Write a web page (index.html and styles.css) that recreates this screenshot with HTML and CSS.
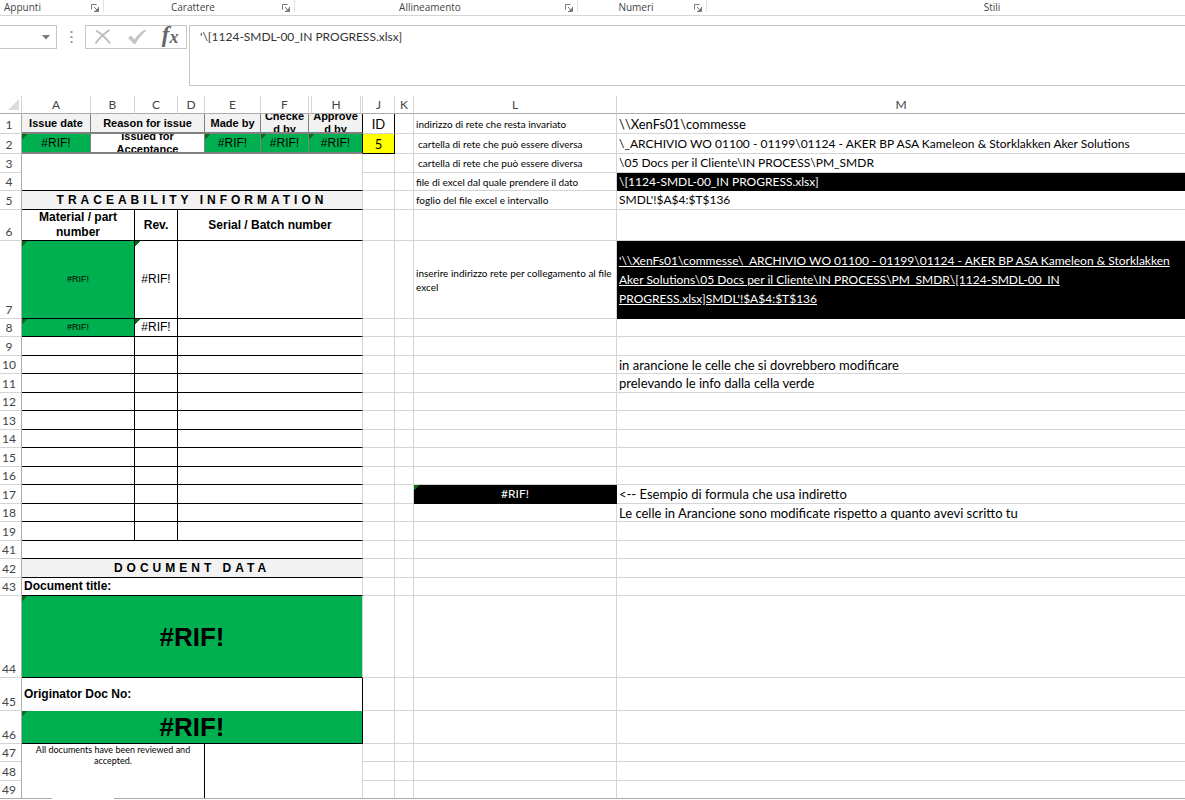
FILE: index.html
```html
<!DOCTYPE html>
<html lang="it">
<head>
  <meta charset="UTF-8" />
  <meta name="viewport" content="width=device-width, initial-scale=1.0"/>
  <title>1124-SMDL-00_IN PROGRESS.xlsx</title>
  <link rel="stylesheet" href="styles.css">
</head>
<body>

  <svg class="defs" aria-hidden="true">
    <symbol id="launcher" viewBox="0 0 8 8">
      <path d="M0.5 5.5V0.5H5.5M3 3L6 6M7.5 3V7.5H3" fill="none" stroke="#777" stroke-width="1"/>
      <path d="M7 4V7H4Z" fill="#777"/>
    </symbol>
  </svg>

  <div class="ribbon">
    <div class="group clipboard">
      <span>Appunti</span>
      <button aria-label="Opzioni Appunti"><svg><use href="#launcher"/></svg></button>
    </div>
    <div class="group font">
      <span>Carattere</span>
      <button aria-label="Opzioni Carattere"><svg><use href="#launcher"/></svg></button>
    </div>
    <div class="group alignment">
      <span>Allineamento</span>
      <button aria-label="Opzioni Allineamento"><svg><use href="#launcher"/></svg></button>
    </div>
    <div class="group numbers">
      <span>Numeri</span>
      <button aria-label="Opzioni Numeri"><svg><use href="#launcher"/></svg></button>
    </div>
    <div class="group styles"><span>Stili</span></div>
  </div>

  <div class="formula-bar">
    <div class="name-box">
      <input type="text" aria-label="Casella nome">
      <button aria-label="Elenco nomi"><svg width="8" height="5" viewBox="0 0 8 5"><path d="M0 0H8L4 4.500Z" fill="#777"/></svg></button>
    </div>
    <svg class="grip" width="3" height="12" viewBox="0 0 3 12"><path d="M1.500 0V12" stroke="#999" stroke-width="2" stroke-dasharray="2 3"/></svg>
    <div class="entry-buttons">
      <button aria-label="Annulla"><svg width="18" height="16" viewBox="0 0 18 16"><path d="M2 1.500C6 4 12 9 16 14.500M15.500 1C10 4.500 5 9.500 1.500 14.500" fill="none" stroke="#bdbdbd" stroke-width="2"/></svg></button>
      <button aria-label="Invio"><svg width="20" height="16" viewBox="0 0 20 16"><path d="M1 9L4 6.500L7.500 10.500C10 6.500 13.500 3 18 0.500L19 2C14 6 11 10 8.500 15H7Z" fill="#c4c4c4"/></svg></button>
      <button class="fx" aria-label="Inserisci funzione"><i>f</i><i class="x">x</i></button>
    </div>
    <textarea class="formula" aria-label="Barra della formula" spellcheck="false">'\[1124-SMDL-00_IN PROGRESS.xlsx]</textarea>
  </div>

  <table class="sheet">
    <colgroup>
      <col class="w-head"><col class="w-a"><col class="w-b"><col class="w-c"><col class="w-d"><col class="w-e"><col class="w-f"><col class="w-g"><col class="w-h"><col class="w-i"><col class="w-j"><col class="w-k"><col class="w-l"><col>
    </colgroup>
    <thead>
      <tr>
        <th class="corner"><svg width="11" height="11" viewBox="0 0 11 11"><path d="M11 0V11H0Z" fill="#dcdcdc"/></svg></th>
        <th>A</th><th>B</th><th>C</th><th>D</th><th>E</th><th>F</th><th></th><th>H</th><th></th><th>J</th><th>K</th><th>L</th><th>M</th>
      </tr>
    </thead>
    <tbody>
      <tr class="h20">
        <th>1</th>
        <td class="title">Issue date</td>
        <td class="title" colspan="3">Reason for issue</td>
        <td class="title">Made by</td>
        <td class="title"><div class="clip">Checke<br>d by</div></td>
        <td class="title edge" colspan="3"><div class="clip">Approve<br>d by</div></td>
        <td class="id">ID</td><td></td>
        <td class="note">indirizzo di rete che resta invariato</td>
        <td>\\XenFs01\commesse</td>
      </tr>
      <tr class="h20">
        <th>2</th>
        <td class="issue green err">#RIF!</td>
        <td class="issue reason" colspan="3"><div class="clip">Issued for<br>Acceptance</div></td>
        <td class="issue green err">#RIF!</td>
        <td class="issue green err">#RIF!</td>
        <td class="issue green err edge" colspan="3">#RIF!</td>
        <td class="id yellow">5</td><td></td>
        <td class="note indent">cartella di rete che può essere diversa</td>
        <td class="path">\_ARCHIVIO WO 01100 - 01199\01124 - AKER BP ASA Kameleon &amp; Storklakken Aker Solutions</td>
      </tr>
      <tr class="h19">
        <th>3</th>
        <td class="line" colspan="9" rowspan="2"></td><td></td><td></td>
        <td class="note indent">cartella di rete che può essere diversa</td>
        <td class="path">\05 Docs per il Cliente\IN PROCESS\PM_SMDR</td>
      </tr>
      <tr>
        <th>4</th>
        <td></td><td></td>
        <td class="note">file di excel dal quale prendere il dato</td>
        <td class="black path">\[1124-SMDL-00_IN PROGRESS.xlsx]</td>
      </tr>
      <tr class="h19">
        <th>5</th>
        <td class="section" colspan="9">TRACEABILITY INFORMATION</td><td></td><td></td>
        <td class="note">foglio del file excel e intervallo</td>
        <td class="path">SMDL'!$A$4:$T$136</td>
      </tr>
      <tr class="h31">
        <th>6</th>
        <td class="box bold" colspan="2">Material / part<br>number</td><td class="box bold">Rev.</td><td class="line bold" colspan="6">Serial / Batch number</td>
        <td></td><td></td><td></td><td></td>
      </tr>
      <tr class="h78">
        <th>7</th>
        <td class="box green err small" colspan="2">#RIF!</td><td class="box err">#RIF!</td><td class="line" colspan="6"></td>
        <td></td><td></td>
        <td class="note wrap">inserire indirizzo rete per collegamento al file excel</td>
        <td class="black path wrap"><a href="#">'\\XenFs01\commesse\_ARCHIVIO WO 01100 - 01199\01124 - AKER BP ASA Kameleon &amp; Storklakken Aker Solutions\05 Docs per il Cliente\IN PROCESS\PM_SMDR\[1124-SMDL-00_IN PROGRESS.xlsx]SMDL'!$A$4:$T$136</a></td>
      </tr>
      <tr>
        <th>8</th>
        <td class="box green err small" colspan="2">#RIF!</td><td class="box err">#RIF!</td><td class="line" colspan="6"></td>
        <td></td><td></td><td></td><td></td>
      </tr>
      <tr class="h19"><th>9</th><td class="box" colspan="2"></td><td class="box"></td><td class="line" colspan="6"></td><td></td><td></td><td></td><td></td></tr>
      <tr><th>10</th><td class="box" colspan="2"></td><td class="box"></td><td class="line" colspan="6"></td><td></td><td></td><td></td><td>in arancione le celle che si dovrebbero modificare</td></tr>
      <tr class="h19"><th>11</th><td class="box" colspan="2"></td><td class="box"></td><td class="line" colspan="6"></td><td></td><td></td><td></td><td>prelevando le info dalla cella verde</td></tr>
      <tr><th>12</th><td class="box" colspan="2"></td><td class="box"></td><td class="line" colspan="6"></td><td></td><td></td><td></td><td></td></tr>
      <tr class="h19"><th>13</th><td class="box" colspan="2"></td><td class="box"></td><td class="line" colspan="6"></td><td></td><td></td><td></td><td></td></tr>
      <tr><th>14</th><td class="box" colspan="2"></td><td class="box"></td><td class="line" colspan="6"></td><td></td><td></td><td></td><td></td></tr>
      <tr class="h19"><th>15</th><td class="box" colspan="2"></td><td class="box"></td><td class="line" colspan="6"></td><td></td><td></td><td></td><td></td></tr>
      <tr><th>16</th><td class="box" colspan="2"></td><td class="box"></td><td class="line" colspan="6"></td><td></td><td></td><td></td><td></td></tr>
      <tr class="h19"><th>17</th><td class="box" colspan="2"></td><td class="box"></td><td class="line" colspan="6"></td><td></td><td></td><td class="black path err center">#RIF!</td><td>&lt;-- Esempio di formula che usa indiretto</td></tr>
      <tr><th>18</th><td class="box" colspan="2"></td><td class="box"></td><td class="line" colspan="6"></td><td></td><td></td><td></td><td>Le celle in Arancione sono modificate rispetto a quanto avevi scritto tu</td></tr>
      <tr class="h19"><th>19</th><td class="box" colspan="2"></td><td class="box"></td><td class="line" colspan="6"></td><td></td><td></td><td></td><td></td></tr>
      <tr><th>41</th><td class="line" colspan="9"></td><td></td><td></td><td></td><td></td></tr>
      <tr class="h19"><th>42</th><td class="section" colspan="9">DOCUMENT DATA</td><td></td><td></td><td></td><td></td></tr>
      <tr><th>43</th><td class="line bold left" colspan="9">Document title:</td><td></td><td></td><td></td><td></td></tr>
      <tr class="h82"><th>44</th><td class="line green err big" colspan="9">#RIF!</td><td></td><td></td><td></td><td></td></tr>
      <tr class="h33"><th>45</th><td class="box open bold left" colspan="9">Originator Doc No:</td><td></td><td></td><td></td><td></td></tr>
      <tr class="h33"><th>46</th><td class="box green err big" colspan="9">#RIF!</td><td></td><td></td><td></td><td></td></tr>
      <tr>
        <th>47</th>
        <td class="box open review" colspan="4" rowspan="3">All documents have been reviewed and<br>accepted.</td><td class="open" colspan="5" rowspan="3"></td>
        <td></td><td></td><td></td><td></td>
      </tr>
      <tr class="h19"><th>48</th><td></td><td></td><td></td><td></td></tr>
      <tr class="last"><th>49</th><td></td><td></td><td></td><td></td></tr>
    </tbody>
  </table>

  <div class="tab-edge"><span></span><span></span></div>

</body>
</html>
```
FILE: styles.css
```css
* {
  box-sizing: border-box;
}
body {
  margin: 0;
  background: #fff;
  color: #000;
  font-family: Lato, sans-serif;
  font-size: 13px;
  overflow: hidden;
}
button, input, textarea {
  margin: 0;
  padding: 0;
  border: none;
  background: none;
  font: inherit;
  color: inherit;
}
.defs {
  display: none;
}

/* ribbon */
.ribbon {
  display: flex;
  height: 16px;
  border-bottom: 1px solid #d4d4d4;
  font-family: "Open Sans", sans-serif;
  font-size: 10px;
  line-height: 14px;
  color: #444;
  overflow: hidden;
}
.group {
  display: flex;
  flex: none;
  height: 12px;
  border-right: 1px solid #e1e1e1;
}
.group span {
  flex: 1;
  text-align: center;
}
.group button {
  display: flex;
  align-items: flex-end;
  width: 12px;
}
.group svg {
  width: 8px;
  height: 8px;
}
.clipboard {
  width: 104px;
}
.clipboard span {
  text-align: left;
  padding-left: 4px;
}
.font {
  width: 191px;
}
.alignment {
  width: 283px;
}
.numbers {
  width: 129px;
}
.styles {
  width: 571px;
}

/* formula bar */
.formula-bar {
  display: flex;
  align-items: flex-start;
  padding-top: 9px;
  height: 80px;
}
.name-box, .entry-buttons {
  display: flex;
  align-items: center;
  height: 24px;
  border: 1px solid #c6c6c6;
}
.name-box {
  width: 57px;
  border-left: none;
}
.name-box input {
  flex: 1;
  min-width: 0;
}
.name-box button {
  display: flex;
  width: 14px;
}
.grip {
  margin: 6px 12px 0 13px;
}
.entry-buttons {
  width: 102px;
  justify-content: space-around;
  margin-right: 2px;
}
.entry-buttons button {
  display: flex;
}
.fx {
  font-family: "Liberation Serif", serif;
  font-size: 23px;
  font-weight: bold;
  line-height: 20px;
  color: #666;
}
.fx .x {
  font-size: 18px;
  line-height: 24px;
}
.formula {
  flex: 1;
  height: 61px;
  padding: 2px 10px;
  border: 1px solid #c6c6c6;
  border-right: none;
  font-size: 12px;
  line-height: 18px;
  color: #333;
  resize: none;
}

/* sheet */
.sheet {
  width: 100%;
  table-layout: fixed;
  border-collapse: separate;
  border-spacing: 0;
}
.w-head { width: 22px; }
.w-a { width: 69px; }
.w-b { width: 44px; }
.w-c { width: 43px; }
.w-d { width: 27px; }
.w-e { width: 56px; }
.w-f { width: 48px; }
.w-g { width: 3px; }
.w-h { width: 49px; }
.w-i { width: 2px; }
.w-j { width: 32px; }
.w-k { width: 19px; }
.w-l { width: 203px; }

tr { height: 18px; }
.h19 { height: 19px; }
.h20 { height: 20px; }
.h31 { height: 31px; }
.h33 { height: 33px; }
.h78 { height: 78px; }
.h82 { height: 82px; }
.last { height: 17px; }

th, td {
  padding: 0;
  border-right: 1px solid #d4d4d4;
  border-bottom: 1px solid #d4d4d4;
  line-height: 16px;
  white-space: nowrap;
}
th {
  font-size: 12px;
  font-weight: normal;
  color: #444;
}
thead th {
  height: 18px;
  border-bottom-color: #ababab;
}
.corner svg {
  display: block;
  margin-left: 8px;
}
tbody th {
  padding-right: 3px;
  border-right-color: #ababab;
  vertical-align: bottom;
}
td {
  padding-left: 2px;
}
td:last-child, th:last-child {
  border-right: none;
}
.note {
  font-size: 10px;
  line-height: 14px;
}
.indent {
  padding-left: 4px;
}
.path {
  font-size: 12px;
}
.wrap {
  white-space: normal;
}
.title, .issue, .box, .line, .section, .review {
  padding: 0;
  text-align: center;
  font-family: "Liberation Sans", sans-serif;
  font-size: 12px;
  line-height: 15px;
}
.title, .issue {
  border-right-color: #808080;
  border-bottom: 2px solid #808080;
}
.title, .reason {
  font-size: 11px;
  font-weight: bold;
}
.title, .section {
  background: #f2f2f2;
}
.bold, .section {
  font-weight: bold;
}
.clip {
  display: flex;
  align-items: center;
  justify-content: center;
  height: 18px;
  line-height: 13px;
  overflow: hidden;
}
.edge {
  border-right-color: #000;
}
.id {
  padding: 0;
  border-right-color: #000;
  text-align: center;
}
.yellow {
  background: #ff0;
  border-bottom-color: #000;
}
.line, .section {
  border-bottom-color: #000;
}
.section {
  letter-spacing: 4px;
}
.box {
  border-right-color: #000;
  border-bottom-color: #000;
}
.open {
  border-bottom: none;
}
.green {
  background-color: #00b050;
}
.black {
  background-color: #000;
  border-color: #000;
  color: #fff;
}
.black a {
  color: #fff;
  line-height: 19px;
}
.err {
  background-image: linear-gradient(135deg, #0b6b1d 4px, transparent 4px);
}
.center {
  padding: 0;
  text-align: center;
}
.left {
  padding-left: 2px;
  text-align: left;
}
.small {
  font-size: 9px;
}
.big {
  font-size: 26px;
  font-weight: bold;
  line-height: 30px;
}
.review {
  font-family: Lato, sans-serif;
  font-size: 9px;
  line-height: 11px;
  vertical-align: top;
}
.last th, .last td {
  border-bottom: none;
}

/* upper edge of the tab strip, open under the active tab */
.tab-edge {
  display: flex;
  gap: 62px;
  height: 2px;
}
.tab-edge span {
  width: 52px;
  border-top: 1px solid #ababab;
}
.tab-edge span:last-child {
  flex: 1;
}
```
